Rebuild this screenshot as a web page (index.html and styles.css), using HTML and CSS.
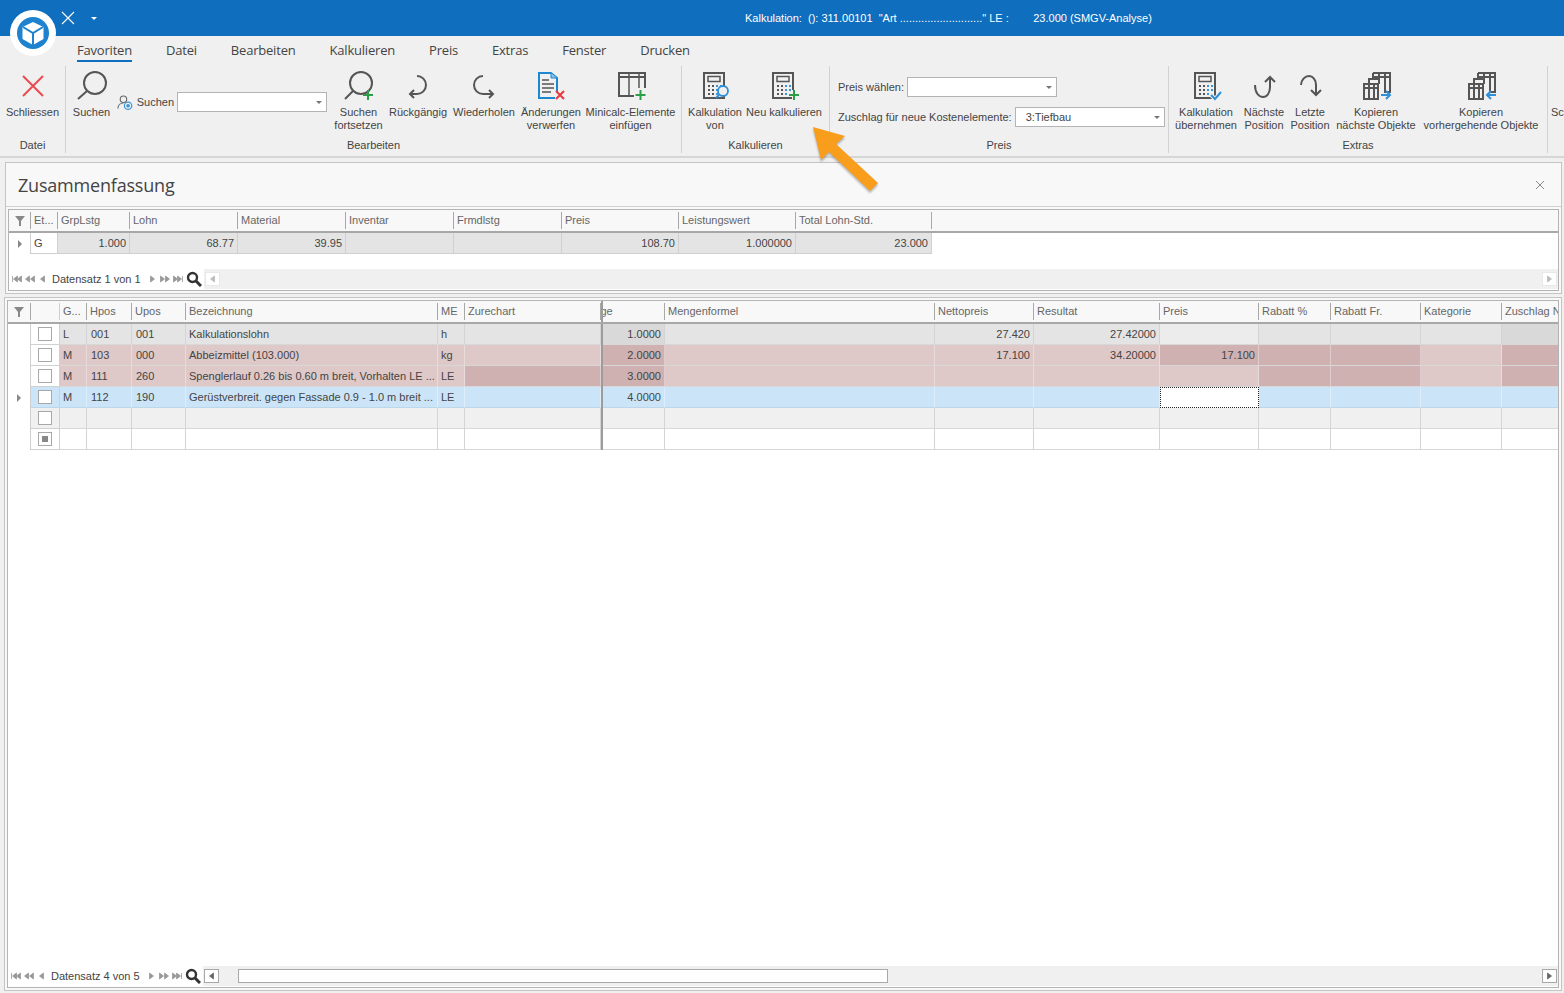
FILE: index.html
```html
<!DOCTYPE html>
<html lang="de">
<head>
  <meta charset="UTF-8">
  <title>Kalkulation</title>
  <link rel="stylesheet" href="styles.css">
</head>
<body>
  <svg class="defs" width="0" height="0">
    <symbol id="nav-first" viewBox="0 0 10 8"><path d="M1 1v6M6 1v6L2 4zM10 1v6L6 4z"/></symbol>
    <symbol id="nav-pprev" viewBox="0 0 10 8"><path d="M5 1v6L1 4zM10 1v6L6 4z"/></symbol>
    <symbol id="nav-prev" viewBox="0 0 10 8"><path d="M7 1v6L3 4z"/></symbol>
    <symbol id="nav-next" viewBox="0 0 10 8"><path d="M3 1v6l4-3z"/></symbol>
    <symbol id="nav-nnext" viewBox="0 0 10 8"><path d="M0 1v6l4-3zM5 1v6l4-3z"/></symbol>
    <symbol id="nav-last" viewBox="0 0 10 8"><path d="M0 1v6l4-3zM4 1v6l4-3zM9 1v6"/></symbol>
    <symbol id="lens" viewBox="0 0 16 16"><circle cx="6.5" cy="6.5" r="4.5" fill="none" stroke="#333" stroke-width="2.4"/><path d="M10 10l5 5" stroke="#333" stroke-width="3"/></symbol>
    <symbol id="funnel" viewBox="0 0 12 10"><path d="M1 0h10L7 5v5H5V5z"/></symbol>
    <symbol id="calc" viewBox="0 0 32 32">
      <path d="M5 3h20v25H5z" fill="none" stroke="#555" stroke-width="2"/>
      <path d="M9 6.500h12v5H9z" fill="none" stroke="#555" stroke-width="1.500"/>
      <path d="M9 15h2v2H9zM13 15h2v2h-2zM9 19h2v2H9zM13 19h2v2h-2zM9 23h2v2H9zM13 23h2v2h-2z" fill="#555"/>
      <path d="M17 15h2v2h-2zM21 15h2v2h-2zM17 19h2v2h-2zM21 19h2v2h-2zM17 23h2v2h-2z" fill="#3d95d8"/>
    </symbol>
    <symbol id="tables" viewBox="0 0 32 32" fill="none" stroke="#555" stroke-width="2">
      <path d="M13 3h17v19h-6M13 3v6M13 7h17M19 3v6M25 3v19"/>
      <path d="M4 14h14v15H4zM4 18h14M9 14v15M14 14v15M9 14V9h10v5"/>
    </symbol>
  </svg>

  <div class="logo">
    <svg viewBox="0 0 46 46" width="46" height="46">
      <circle cx="23" cy="23" r="23" fill="#fff"/>
      <circle cx="23" cy="23" r="16" fill="#1e82cf"/>
      <path d="M23 12l10.500 5v12L23 35l-10.500-6V17z" fill="#fff"/>
      <path d="M13 17l10 6 10-6M23 23v12" fill="none" stroke="#1e82cf" stroke-width="2"/>
    </svg>
  </div>

  <div class="titlebar">
    <div class="quick">
      <svg width="14" height="14" viewBox="0 0 14 14"><path d="M1 1l12 12M13 1L1 13" stroke="#fff" stroke-width="1.100"/></svg>
      <span class="caret"></span>
    </div>
    <div class="title">Kalkulation:  (): 311.00101  "Art ..........................." LE :        23.000 (SMGV-Analyse)</div>
  </div>

  <div class="tabs">
    <a class="tab active">Favoriten</a>
    <a class="tab">Datei</a>
    <a class="tab">Bearbeiten</a>
    <a class="tab">Kalkulieren</a>
    <a class="tab">Preis</a>
    <a class="tab">Extras</a>
    <a class="tab">Fenster</a>
    <a class="tab">Drucken</a>
  </div>

  <div class="ribbon">
    <section class="group g-datei">
      <div class="items">
        <div class="item w65">
          <svg class="icon" viewBox="0 0 32 32"><path d="M6 6l20 20M26 6L6 26" stroke="#ea4a50" stroke-width="2" fill="none"/></svg>
          <span>Schliessen</span>
        </div>
      </div>
      <div class="group-label">Datei</div>
    </section>

    <section class="group g-bearb">
      <div class="items">
        <div class="item w41">
          <svg class="icon" viewBox="0 0 32 32"><circle cx="19" cy="13" r="11" fill="none" stroke="#555" stroke-width="2"/><path d="M2 29l9-8" stroke="#555" stroke-width="2"/></svg>
          <span>Suchen</span>
        </div>
        <div class="search">
          <svg width="17" height="17" viewBox="0 0 17 17"><circle cx="7" cy="5" r="3.500" fill="none" stroke="#666" stroke-width="1.200"/><path d="M1 15c0-4 3-6 6-6" fill="none" stroke="#666" stroke-width="1.200"/><circle cx="12" cy="12" r="4" fill="none" stroke="#3d95d8" stroke-width="1.300"/><circle cx="12" cy="12" r="2" fill="#3d95d8"/></svg>
          <span class="search-label">Suchen</span>
          <div class="combo w150"></div>
        </div>
        <div class="item w57">
          <svg class="icon" viewBox="0 0 32 32"><circle cx="18" cy="13" r="11" fill="none" stroke="#555" stroke-width="2"/><path d="M2 29l8-8" stroke="#555" stroke-width="2"/><path d="M25 20v10M20 25h10" stroke="#2e9e46" stroke-width="2"/></svg>
          <span>Suchen<br>fortsetzen</span>
        </div>
        <div class="item w56">
          <svg class="icon" viewBox="0 0 32 32"><path d="M15 6a9 9 0 0 1 0 18H8M12 20l-4 4 4 4" fill="none" stroke="#555" stroke-width="2"/></svg>
          <span>Rückgängig</span>
        </div>
        <div class="item w70">
          <svg class="icon" viewBox="0 0 32 32"><path d="M15 6a9 9 0 0 0 0 18h10M21 20l4 4-4 4" fill="none" stroke="#555" stroke-width="2"/></svg>
          <span>Wiederholen</span>
        </div>
        <div class="item w58">
          <svg class="icon" viewBox="0 0 32 32"><path d="M22 22V8l-6-5H4v25h16" fill="none" stroke="#1d87d1" stroke-width="2"/><path d="M16 3v5h6" fill="#8cc3ea" stroke="#1d87d1"/><path d="M7 10h7M7 14h12M7 18h12M7 22h9" stroke="#555" stroke-width="1.500"/><path d="M21 21l8 8M29 21l-8 8" stroke="#e8393f" stroke-width="2"/></svg>
          <span>Änderungen<br>verwerfen</span>
        </div>
        <div class="item w95">
          <svg class="icon" viewBox="0 0 32 32"><path d="M19 26H4V3h26v15" fill="none" stroke="#555" stroke-width="2"/><path d="M4 7h26" stroke="#555" stroke-width="2"/><path d="M14 3v23M24 3v15" stroke="#555" stroke-width="1.500"/><path d="M25.500 20v10M20.500 25h10" stroke="#2e9e46" stroke-width="2"/></svg>
          <span>Minicalc-Elemente<br>einfügen</span>
        </div>
      </div>
      <div class="group-label">Bearbeiten</div>
    </section>

    <section class="group g-kalk">
      <div class="items">
        <div class="item w56">
          <svg class="icon" viewBox="0 0 32 32"><use href="#calc"/><circle cx="24" cy="21" r="5" fill="#f0f0f0" stroke="#2f8fd8" stroke-width="1.800"/><path d="M20 25l-3 3" stroke="#2f8fd8" stroke-width="2"/></svg>
          <span>Kalkulation<br>von</span>
        </div>
        <div class="item w76">
          <svg class="icon" viewBox="0 0 32 32"><use href="#calc"/><path d="M26 20v10M21 25h10" stroke="#f0f0f0" stroke-width="4"/><path d="M26 20v10M21 25h10" stroke="#2e9e46" stroke-width="2"/></svg>
          <span>Neu kalkulieren</span>
        </div>
      </div>
      <div class="group-label">Kalkulieren</div>
    </section>

    <section class="group g-preis">
      <div class="fields">
        <div class="field"><label>Preis wählen:</label><div class="combo w150"></div></div>
        <div class="field"><label>Zuschlag für neue Kostenelemente:</label><div class="combo w150">3:Tiefbau</div></div>
      </div>
      <div class="group-label">Preis</div>
    </section>

    <section class="group g-extras">
      <div class="items">
        <div class="item w62">
          <svg class="icon" viewBox="0 0 32 32"><use href="#calc"/><path d="M21 25l4 4 6-7" fill="none" stroke="#f0f0f0" stroke-width="4"/><path d="M21 25l4 4 6-7" fill="none" stroke="#2f8fd8" stroke-width="2"/></svg>
          <span>Kalkulation<br>übernehmen</span>
        </div>
        <div class="item w48">
          <svg class="icon" viewBox="0 0 32 32"><path d="M7 15c0 8 4 12 8 12s7-4 7-10V7M17 12l5-5 5 5" fill="none" stroke="#555" stroke-width="2"/></svg>
          <span>Nächste<br>Position</span>
        </div>
        <div class="item w38">
          <svg class="icon" viewBox="0 0 32 32"><path d="M7 15c0-5 4-9 8-9s7 4 7 9v10M17 20l5 5 5-5" fill="none" stroke="#555" stroke-width="2"/></svg>
          <span>Letzte<br>Position</span>
        </div>
        <div class="item w88">
          <svg class="icon" viewBox="0 0 32 32"><use href="#tables"/><path d="M21 25h9M26 21l4 4-4 4" fill="none" stroke="#2f8fd8" stroke-width="2"/></svg>
          <span>Kopieren<br>nächste Objekte</span>
        </div>
        <div class="item w116">
          <svg class="icon" viewBox="0 0 32 32"><use href="#tables"/><path d="M31 25h-9M26 21l-4 4 4 4" fill="none" stroke="#2f8fd8" stroke-width="2"/></svg>
          <span>Kopieren<br>vorhergehende Objekte</span>
        </div>
      </div>
      <div class="group-label">Extras</div>
    </section>

    <section class="group g-rest">
      <div class="items"><div class="item w65"><span>Schliessen</span></div></div>
    </section>
  </div>

  <svg class="pointer" width="90" height="90" viewBox="0 0 90 90">
    <path d="M8 7l32 9-9 8 42 39-8 8-41-39-8 8z" fill="#f99d1c"/>
  </svg>

  <div class="panel summary">
    <div class="panel-head">
      <h2>Zusammenfassung</h2>
      <svg width="10" height="10" viewBox="0 0 10 10"><path d="M1 1l8 8M9 1L1 9" stroke="#888"/></svg>
    </div>
    <div class="grid">
      <div class="row sum-cols head">
        <div class="cell filter"><svg width="12" height="10"><use href="#funnel"/></svg></div>
        <div class="cell">Et...</div><div class="cell">GrpLstg</div><div class="cell">Lohn</div><div class="cell">Material</div><div class="cell">Inventar</div><div class="cell">Frmdlstg</div><div class="cell">Preis</div><div class="cell">Leistungswert</div><div class="cell">Total Lohn-Std.</div><div class="cell last"></div>
      </div>
      <div class="row sum-cols body">
        <div class="cell indicator"><span class="mark"></span></div>
        <div class="cell plain">G</div>
        <div class="cell gray num">1.000</div><div class="cell gray num">68.77</div><div class="cell gray num">39.95</div><div class="cell gray"></div><div class="cell gray"></div><div class="cell gray num">108.70</div><div class="cell gray num">1.000000</div><div class="cell gray num">23.000</div>
      </div>
      <div class="grid-space"></div>
      <div class="pager">
        <svg class="nav"><use href="#nav-first"/></svg><svg class="nav"><use href="#nav-pprev"/></svg><svg class="nav"><use href="#nav-prev"/></svg>
        <span class="pager-text">Datensatz 1 von 1</span>
        <svg class="nav"><use href="#nav-next"/></svg><svg class="nav"><use href="#nav-nnext"/></svg><svg class="nav"><use href="#nav-last"/></svg>
        <svg class="lens"><use href="#lens"/></svg>
        <div class="scrollbar">
          <div class="sb-btn pale"><svg class="nav"><use href="#nav-prev"/></svg></div>
          <div class="sb-track"></div>
          <div class="sb-btn pale"><svg class="nav"><use href="#nav-next"/></svg></div>
        </div>
      </div>
    </div>
  </div>

  <div class="panel main">
    <div class="grid">
      <div class="row main-cols head">
        <div class="cell filter"><svg width="12" height="10"><use href="#funnel"/></svg></div>
        <div class="cell blank"></div><div class="cell">G...</div><div class="cell">Hpos</div><div class="cell">Upos</div><div class="cell">Bezeichnung</div><div class="cell">ME</div><div class="cell">Zurechart</div><div class="cell split"></div><div class="cell clipped">Menge</div><div class="cell">Mengenformel</div><div class="cell">Nettopreis</div><div class="cell">Resultat</div><div class="cell">Preis</div><div class="cell">Rabatt %</div><div class="cell">Rabatt Fr.</div><div class="cell">Kategorie</div><div class="cell cut">Zuschlag Nr.</div>
      </div>

      <div class="row main-cols body gray-row">
        <div class="cell indicator"></div><div class="cell check"><span class="box"></span></div>
        <div class="cell">L</div><div class="cell pad">001</div><div class="cell pad">001</div><div class="cell">Kalkulationslohn</div><div class="cell">h</div><div class="cell"></div><div class="cell split"></div>
        <div class="cell num dark">1.0000</div><div class="cell"></div><div class="cell num">27.420</div><div class="cell num">27.42000</div><div class="cell light"></div><div class="cell"></div><div class="cell"></div><div class="cell"></div><div class="cell dark"></div>
      </div>
      <div class="row main-cols body pink-row">
        <div class="cell indicator"></div><div class="cell check"><span class="box"></span></div>
        <div class="cell">M</div><div class="cell pad">103</div><div class="cell pad">000</div><div class="cell">Abbeizmittel (103.000)</div><div class="cell">kg</div><div class="cell"></div><div class="cell split"></div>
        <div class="cell num dark">2.0000</div><div class="cell"></div><div class="cell num">17.100</div><div class="cell num">34.20000</div><div class="cell num dark">17.100</div><div class="cell dark"></div><div class="cell dark"></div><div class="cell"></div><div class="cell dark"></div>
      </div>
      <div class="row main-cols body pink-row">
        <div class="cell indicator"></div><div class="cell check"><span class="box"></span></div>
        <div class="cell">M</div><div class="cell pad">111</div><div class="cell pad">260</div><div class="cell">Spenglerlauf 0.26 bis 0.60 m breit, Vorhalten LE ...</div><div class="cell">LE</div><div class="cell dark"></div><div class="cell split"></div>
        <div class="cell num dark">3.0000</div><div class="cell"></div><div class="cell"></div><div class="cell"></div><div class="cell"></div><div class="cell dark"></div><div class="cell dark"></div><div class="cell"></div><div class="cell dark"></div>
      </div>
      <div class="row main-cols body blue-row">
        <div class="cell indicator"><span class="mark"></span></div><div class="cell check"><span class="box"></span></div>
        <div class="cell">M</div><div class="cell pad">112</div><div class="cell pad">190</div><div class="cell">Gerüstverbreit. gegen Fassade 0.9 - 1.0 m breit ...</div><div class="cell">LE</div><div class="cell"></div><div class="cell split"></div>
        <div class="cell num">4.0000</div><div class="cell"></div><div class="cell"></div><div class="cell"></div><div class="cell editing"></div><div class="cell"></div><div class="cell"></div><div class="cell"></div><div class="cell"></div>
      </div>
      <div class="row main-cols body alt-row">
        <div class="cell indicator"></div><div class="cell check"><span class="box"></span></div>
        <div class="cell"></div><div class="cell"></div><div class="cell"></div><div class="cell"></div><div class="cell"></div><div class="cell"></div><div class="cell split"></div>
        <div class="cell"></div><div class="cell"></div><div class="cell"></div><div class="cell"></div><div class="cell"></div><div class="cell"></div><div class="cell"></div><div class="cell"></div><div class="cell"></div>
      </div>
      <div class="row main-cols body plain-row">
        <div class="cell indicator"></div><div class="cell check"><span class="box mixed"></span></div>
        <div class="cell"></div><div class="cell"></div><div class="cell"></div><div class="cell"></div><div class="cell"></div><div class="cell"></div><div class="cell split"></div>
        <div class="cell"></div><div class="cell"></div><div class="cell"></div><div class="cell"></div><div class="cell"></div><div class="cell"></div><div class="cell"></div><div class="cell"></div><div class="cell"></div>
      </div>

      <div class="grid-space"></div>
      <div class="pager">
        <svg class="nav"><use href="#nav-first"/></svg><svg class="nav"><use href="#nav-pprev"/></svg><svg class="nav"><use href="#nav-prev"/></svg>
        <span class="pager-text">Datensatz 4 von 5</span>
        <svg class="nav"><use href="#nav-next"/></svg><svg class="nav"><use href="#nav-nnext"/></svg><svg class="nav"><use href="#nav-last"/></svg>
        <svg class="lens"><use href="#lens"/></svg>
        <div class="scrollbar">
          <div class="sb-btn"><svg class="nav"><use href="#nav-prev"/></svg></div>
          <div class="sb-track"><div class="sb-thumb"></div></div>
          <div class="sb-btn"><svg class="nav"><use href="#nav-next"/></svg></div>
        </div>
      </div>
    </div>
  </div>
</body>
</html>
```

FILE: styles.css
```css
* {
  margin: 0;
  padding: 0;
  box-sizing: border-box;
}

html, body {
  height: 100%;
  overflow: hidden;
}

body {
  position: relative;
  display: flex;
  flex-direction: column;
  background: #f0f0f0;
  color: #444;
  font-family: 'Liberation Sans', Arial, sans-serif;
  font-size: 11px;
}

.defs {
  position: absolute;
}

/* title bar */
.titlebar {
  display: flex;
  align-items: center;
  flex: 0 0 36px;
  background: #106ebe;
  color: #fff;
}

.quick {
  display: flex;
  align-items: center;
  gap: 16px;
  width: 745px;
  padding-left: 61px;
}

.caret {
  border: 3px solid transparent;
  border-top: 3px solid #fff;
  border-bottom: 0;
}

.title {
  white-space: pre;
}

.logo {
  position: absolute;
  left: 10px;
  top: 10px;
  width: 46px;
  height: 46px;
}

/* tabs */
.tabs {
  display: flex;
  flex: 0 0 30px;
  gap: 34px;
  padding: 5px 0 0 77px;
}

.tab {
  height: 21px;
  font-family: 'Open Sans', sans-serif;
  font-size: 13px;
  line-height: 18px;
  letter-spacing: -0.2px;
  color: #444;
}

.tab.active {
  border-bottom: 2px solid #106ebe;
}

/* ribbon */
.ribbon {
  display: flex;
  flex: 0 0 92px;
  overflow: hidden;
  border-bottom: 2px solid #d6d6d6;
  height: 92px;
}

.group {
  display: flex;
  flex-direction: column;
  flex: none;
  height: 87px;
  border-right: 1px solid #d2d2d2;
}

.g-datei { width: 66px; }
.g-bearb { width: 616px; }
.g-kalk { width: 148px; }
.g-preis { width: 339px; }
.g-extras { width: 379px; }
.g-rest { border-right: 0; }

.items {
  display: flex;
  gap: 3px;
}

.g-bearb .items,
.g-kalk .items { padding-left: 5px; }
.g-extras .items { padding-left: 6px; }
.g-rest .items { padding-left: 3px; }

.item {
  display: flex;
  flex-direction: column;
  align-items: center;
  flex: none;
  padding-top: 4px;
  text-align: center;
  line-height: 13px;
  white-space: nowrap;
}

.icon {
  width: 32px;
  height: 32px;
  margin-bottom: 4px;
}

.w38 { width: 38px; }
.w41 { width: 41px; }
.w48 { width: 48px; }
.w56 { width: 56px; }
.w57 { width: 57px; }
.w58 { width: 58px; }
.w62 { width: 62px; }
.w65 { width: 65px; }
.w70 { width: 70px; }
.w76 { width: 76px; }
.w88 { width: 88px; }
.w95 { width: 95px; }
.w116 { width: 116px; }
.w150 { width: 150px; }

.g-rest .item {
  padding-top: 40px;
  text-align: left;
  align-items: flex-start;
}

.group-label {
  margin-top: auto;
  height: 14px;
  text-align: center;
  line-height: 13px;
}

.search {
  display: flex;
  align-items: center;
  flex: none;
  gap: 3px;
  width: 212px;
  height: 20px;
  margin-top: 26px;
  padding-left: 2px;
}

.search-label {
  margin-left: 1px;
}

.combo {
  position: relative;
  height: 20px;
  flex: none;
  padding-left: 10px;
  background: #fff;
  border: 1px solid #b4b4b4;
  line-height: 18px;
}

.combo::after {
  content: "";
  position: absolute;
  right: 4px;
  top: 8px;
  border: 3px solid transparent;
  border-top: 3px solid #777;
  border-bottom: 0;
}

.fields {
  display: flex;
  flex-direction: column;
  gap: 10px;
  padding: 11px 0 0 8px;
}

.field {
  display: flex;
  align-items: center;
  gap: 3px;
}

.pointer {
  position: absolute;
  left: 805px;
  top: 120px;
  filter: drop-shadow(0 2px 1px rgba(90, 90, 90, .45));
}

/* panels */
.panel {
  flex: none;
  display: flex;
  flex-direction: column;
  background: #f8f8f8;
  border: 1px solid #c4c4c4;
}

.summary {
  height: 132px;
  margin: 4px 2px 0 5px;
}

.panel-head {
  display: flex;
  align-items: center;
  justify-content: space-between;
  height: 44px;
  padding: 0 16px 0 12px;
  border-bottom: 1px solid #d0d0d0;
}

.panel-head h2 {
  font-family: 'Open Sans', sans-serif;
  font-size: 18px;
  font-weight: 400;
  letter-spacing: -0.2px;
  color: #444;
}

.main {
  flex: 1;
  margin: 3px 2px 2px 4px;
}

.grid {
  flex: 1;
  display: flex;
  flex-direction: column;
  margin: 2px;
  background: #fff;
  border: 1px solid #b4b4b4;
  overflow: hidden;
}

.row {
  display: grid;
  flex: none;
}

.sum-cols {
  grid-template-columns: 22px 27px 72px 108px 108px 108px 108px 117px 117px 136px 1fr;
}

.main-cols {
  grid-template-columns: 23px 29px 27px 45px 54px 252px 27px 136px 2px 62px 270px 99px 126px 99px 72px 90px 81px 59px;
}

.cell {
  min-width: 0;
  padding: 0 3px;
  overflow: hidden;
  white-space: nowrap;
}

.cell.pad {
  padding-left: 4px;
}

.head {
  height: 23px;
  background: #f8f8f8;
  border-bottom: 2px solid #a8a8a8;
  color: #666;
}

.head .cell {
  margin: 2px 0 2px;
  line-height: 17px;
  border-right: 1px solid #a8a8a8;
}

.head .cell.last,
.head .cell.cut,
.head .cell.clipped {
  border-right: 0;
}

.head .cell.clipped {
  text-indent: -27px;
  border-right: 1px solid #a8a8a8;
}

.head .cell.filter {
  padding-top: 2px;
  text-align: center;
  fill: #888;
}

.head .cell.blank {
  border-right: 1px solid #cfcfcf;
}

.body {
  height: 21px;
}

.body .cell {
  line-height: 20px;
  border-right: 1px solid rgba(255, 255, 255, .35);
  border-bottom: 1px solid #d8d8d8;
}

.num {
  text-align: right;
}

.cell.split,
.head .cell.split {
  margin: 0;
  padding: 0;
  background: #9c9c9c;
  border: 0;
}

.summary .body {
  height: 21px;
}

.summary .cell.gray {
  background: #e4e4e4;
  border-right: 1px solid #d0d0d0;
  border-bottom: 1px solid #cfcfcf;
}

.summary .cell.plain {
  background: #fff;
  border-right: 1px solid #d0d0d0;
  border-bottom: 1px solid #cfcfcf;
}

.cell.indicator {
  display: flex;
  align-items: center;
  justify-content: center;
  background: #fff;
  border: 0;
  border-right: 1px solid #cfcfcf;
}

.body .cell.indicator {
  border-bottom: 0;
}

.mark {
  border: 4px solid transparent;
  border-left: 4px solid #888;
  border-right: 0;
}

.cell.check {
  display: flex;
  align-items: center;
  justify-content: center;
  background: #fff;
  border-right: 1px solid #d0d0d0;
  border-bottom: 1px solid #d0d0d0;
}

.box {
  display: flex;
  align-items: center;
  justify-content: center;
  width: 14px;
  height: 14px;
  background: #fff;
  border: 1px solid #a8a8a8;
}

.box.mixed::after {
  content: "";
  width: 6px;
  height: 6px;
  background: #888;
}

.gray-row .cell { background: #e4e4e4; border-right-color: #d4d4d4; }
.gray-row .cell.dark { background: #d9d9d9; }
.gray-row .cell.light { background: #ececec; }

.pink-row .cell { background: #dec8c8; }
.pink-row .cell.dark { background: #cfb1b1; }

.blue-row .cell { background: #cbe4f7; border-bottom-color: #bcd7ea; }
.blue-row .cell.editing { background: #fff; border: 1px dotted #222; }

.alt-row .cell { background: #f0f0f0; border-right-color: #d4d4d4; }
.plain-row .cell { background: #fff; border-right-color: #d4d4d4; }

.body .cell.check { border-right-color: #d0d0d0; }
.gray-row .cell.check,
.pink-row .cell.check { background: #fff; }
.body .cell.split { background: #9c9c9c; border: 0; }
.body .cell.indicator { background: #fff; border-right-color: #cfcfcf; }

.grid-space {
  flex: 1;
}

/* record navigator */
.pager {
  display: flex;
  align-items: center;
  flex: none;
  height: 20px;
  margin-bottom: 1px;
  padding-left: 1px;
  color: #444;
}

.nav {
  flex: none;
  width: 13px;
  height: 8px;
  fill: #999;
  stroke: #999;
  stroke-width: .8;
}

.pager-text {
  margin: 0 5px 0 3px;
}

.lens {
  flex: none;
  width: 16px;
  height: 16px;
  margin-left: 1px;
}

.scrollbar {
  flex: 1;
  display: flex;
  align-items: center;
  height: 20px;
  margin-left: 2px;
  padding: 0 1px;
  background: #f0f0f0;
}

.sb-track {
  flex: 1;
  height: 14px;
  padding-left: 19px;
}

.sb-thumb {
  width: 650px;
  height: 14px;
  background: #fff;
  border: 1px solid #a8a8a8;
}

.sb-btn {
  display: flex;
  align-items: center;
  justify-content: center;
  flex: none;
  width: 15px;
  height: 14px;
  background: #fff;
  border: 1px solid #a8a8a8;
}

.sb-btn .nav {
  fill: #666;
  stroke: #666;
}

.sb-btn.pale {
  border-color: #e8e8e8;
}

.sb-btn.pale .nav {
  fill: #bbb;
  stroke: #bbb;
}
```
